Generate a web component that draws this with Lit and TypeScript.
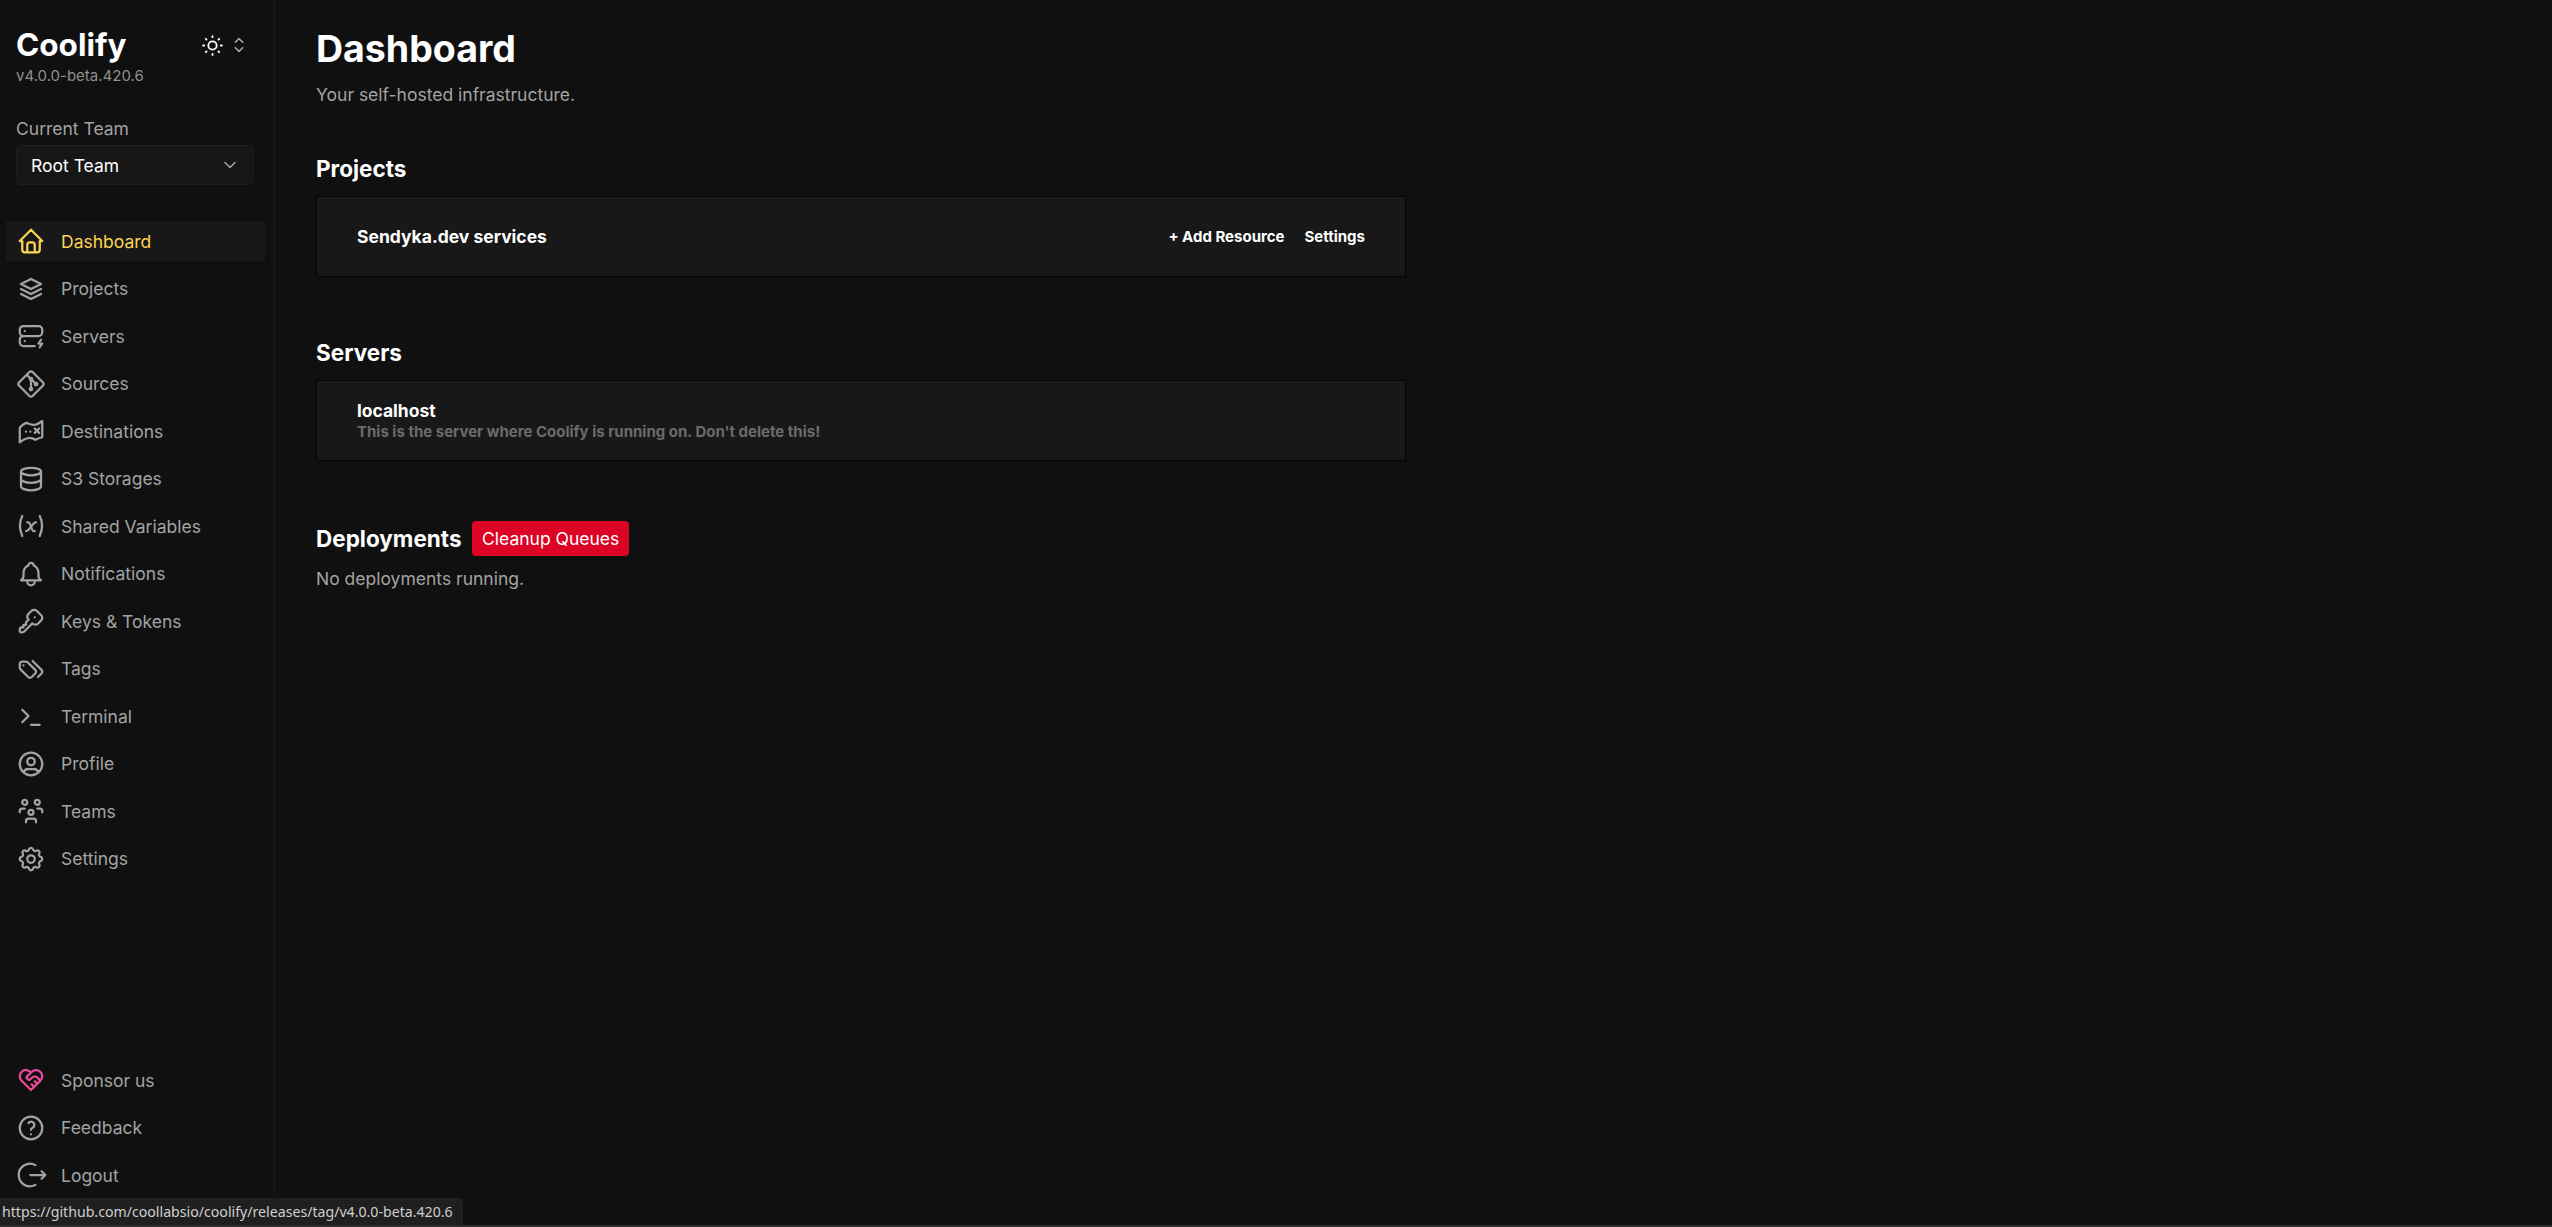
import { LitElement, html, css, svg } from 'lit';
import { customElement } from 'lit/decorators.js';

// tabler-style outline icons, 24 grid
const P: Record<string, string> = {
  home: 'M5 12H3l9-9l9 9h-2M5 12v7a2 2 0 0 0 2 2h10a2 2 0 0 0 2-2v-7M9 21v-6a2 2 0 0 1 2-2h2a2 2 0 0 1 2 2v6',
  stack: 'M12 4L4 8l8 4l8-4l-8-4M4 12l8 4l8-4M4 16l8 4l8-4',
  server:
    'M3 7a3 3 0 0 1 3-3h12a3 3 0 0 1 3 3v2a3 3 0 0 1-3 3h-12a3 3 0 0 1-3-3zM15 20h-9a3 3 0 0 1-3-3v-2a3 3 0 0 1 3-3h12M7 8v.01M7 16v.01M20 15l-2 3h3l-2 3',
  git: 'M15 12a1 1 0 1 0 2 0a1 1 0 1 0-2 0M11 8a1 1 0 1 0 2 0a1 1 0 1 0-2 0M11 16a1 1 0 1 0 2 0a1 1 0 1 0-2 0M12 15v-6M15 11l-2-2M11 7l-1.9-1.9M13.446 2.6l7.955 7.954a2.045 2.045 0 0 1 0 2.892l-7.955 7.955a2.045 2.045 0 0 1-2.892 0l-7.955-7.955a2.045 2.045 0 0 1 0-2.892l7.955-7.955a2.045 2.045 0 0 1 2.892 0z',
  map: 'M3 9.500c1.500-2 3.500-3.500 5.500-4c2.500 1 4 2 7 1.500c2-.5 3.500-1.500 5.500-3v13c-2 .5-3.500 1-5.500 2c-2.500-1.500-4.500-2-7-1c-2 .5-3.500 1.500-5.500 3zM8 12.500v.01M11.500 12.500v.01M15 10l3.500 3.500M18.500 10l-3.500 3.500',
  database:
    'M4 6a8 3 0 1 0 16 0a8 3 0 1 0-16 0M4 6v6a8 3 0 0 0 16 0v-6M4 12v6a8 3 0 0 0 16 0v-6',
  variable:
    'M5 4c-2.500 5-2.500 10 0 16m14-16c2.500 5 2.500 10 0 16M9 9h1c1 0 1 1 2.016 3.527C13 15 13 16 14 16h1M8 16c1.500 0 3-2 4-3.500S14.500 9 16 9',
  bell: 'M10 5a2 2 0 1 1 4 0a7 7 0 0 1 4 6v3a4 4 0 0 0 2 3h-16a4 4 0 0 0 2-3v-3a7 7 0 0 1 4-6M9 17v1a3 3 0 0 0 6 0v-1',
  key: 'M16.555 3.843l3.602 3.602a2.877 2.877 0 0 1 0 4.069l-2.643 2.643a2.877 2.877 0 0 1-4.069 0l-.301-.301l-6.558 6.558a2 2 0 0 1-1.239.578l-.175.008h-1.172a1 1 0 0 1-.993-.883l-.007-.117v-1.172a2 2 0 0 1 .467-1.284l.119-.13l.414-.414h2v-2h2v-2l2.144-2.144l-.301-.301a2.877 2.877 0 0 1 0-4.069l2.643-2.643a2.877 2.877 0 0 1 4.069 0zM15 9h.01',
  tags: 'M7.859 6h-2.834a2.025 2.025 0 0 0-2.025 2.025v2.834c0 .537.213 1.052.593 1.432l6.116 6.116a2.025 2.025 0 0 0 2.864 0l2.834-2.834a2.025 2.025 0 0 0 0-2.864l-6.117-6.116a2.025 2.025 0 0 0-1.431-.593zM17.573 18.407l2.834-2.834a2.025 2.025 0 0 0 0-2.864l-7.117-7.116M6 9h-.01',
  terminal: 'M5 7l5 5l-5 5M12 19h7',
  user: 'M3 12a9 9 0 1 0 18 0a9 9 0 1 0-18 0M9 10a3 3 0 1 0 6 0a3 3 0 1 0-6 0M6.168 18.849a4 4 0 0 1 3.832-2.849h4a4 4 0 0 1 3.834 2.855',
  users:
    'M10 13a2 2 0 1 0 4 0a2 2 0 0 0-4 0M8 21v-1a2 2 0 0 1 2-2h4a2 2 0 0 1 2 2v1M15 5a2 2 0 1 0 4 0a2 2 0 0 0-4 0M17 10h2a2 2 0 0 1 2 2v1M5 5a2 2 0 1 0 4 0a2 2 0 0 0-4 0M3 13v-1a2 2 0 0 1 2-2h2',
  settings:
    'M10.325 4.317c.426-1.756 2.924-1.756 3.35 0a1.724 1.724 0 0 0 2.573 1.066c1.543-.94 3.31.826 2.37 2.37a1.724 1.724 0 0 0 1.065 2.572c1.756.426 1.756 2.924 0 3.35a1.724 1.724 0 0 0-1.066 2.573c.94 1.543-.826 3.31-2.37 2.37a1.724 1.724 0 0 0-2.572 1.065c-.426 1.756-2.924 1.756-3.35 0a1.724 1.724 0 0 0-2.573-1.066c-1.543.94-3.31-.826-2.37-2.37a1.724 1.724 0 0 0-1.065-2.572c-1.756-.426-1.756-2.924 0-3.35a1.724 1.724 0 0 0 1.066-2.573c-.94-1.543.826-3.31 2.37-2.37c1 .608 2.296.07 2.572-1.065zM9 12a3 3 0 1 0 6 0a3 3 0 0 0-6 0',
  heart:
    'M19.500 12.572l-7.500 7.428l-7.500-7.428a5 5 0 1 1 7.500-6.566a5 5 0 1 1 7.500 6.572M12 6l-3.293 3.293a1 1 0 0 0 0 1.414l.543.543c.69.69 1.810.69 2.500 0l1-1a3.182 3.182 0 0 1 4.500 0l2.250 2.250M12.500 15.500l2 2M15 13l2 2',
  help: 'M3 12a9 9 0 1 0 18 0a9 9 0 1 0-18 0M12 17v.01M12 13.500a1.500 1.500 0 0 1 1-1.500a2.600 2.600 0 1 0-3-4',
  logout: 'M15.500 4.100a9 9 0 1 0 0 15.800M11.500 12h12M20.500 9l3 3l-3 3',
  sun: 'M8 12a4 4 0 1 0 8 0a4 4 0 1 0-8 0M3 12h1m8-9v1m8 8h1m-9 8v1M5.600 5.600l.7.7m12.100-.7l-.7.7m0 11.400l.7.7m-12.100-.7l-.7.7',
  updown: 'M8 9l4-4l4 4M16 15l-4 4l-4-4',
  chevron: 'M6 9l6 6l6-6',
};

const icon = (name: string, cls = 'ico') =>
  html`<svg class=${cls} viewBox="0 0 24 24" fill="none" stroke="currentColor" stroke-width="1.8" stroke-linecap="round" stroke-linejoin="round">
    ${svg`<path d=${P[name]} />`}
  </svg>`;

const NAV = [
  ['home', 'Dashboard'],
  ['stack', 'Projects'],
  ['server', 'Servers'],
  ['git', 'Sources'],
  ['map', 'Destinations'],
  ['database', 'S3 Storages'],
  ['variable', 'Shared Variables'],
  ['bell', 'Notifications'],
  ['key', 'Keys & Tokens'],
  ['tags', 'Tags'],
  ['terminal', 'Terminal'],
  ['user', 'Profile'],
  ['users', 'Teams'],
  ['settings', 'Settings'],
];

const BOTTOM = [
  ['heart', 'Sponsor us'],
  ['help', 'Feedback'],
  ['logout', 'Logout'],
];

@customElement('app-root')
export class AppRoot extends LitElement {
  static styles = css`
    :host {
      display: flex;
      height: 1227px;
      overflow: hidden;
      background: #101010;
      color: #a3a3a3;
      font-family: Inter, 'Liberation Sans', sans-serif;
      font-size: 17.5px;
      line-height: 25px;
      position: relative;
    }
    .side {
      width: 275px;
      flex: none;
      box-sizing: border-box;
      border-right: 1px solid #191919;
      display: flex;
      flex-direction: column;
      padding: 25px 0 0 6px;
    }
    .brand {
      display: flex;
      justify-content: space-between;
      padding: 0 24px 0 10px;
    }
    .logo {
      font-size: 31.5px;
      line-height: 40px;
      font-weight: 700;
      color: #fff;
    }
    .version {
      font-size: 15px;
      line-height: 20px;
      padding-left: 10px;
      margin-top: 1px;
      color: #8f8f8f;
    }
    .modes {
      display: flex;
      align-items: center;
      color: #fff;
      gap: 3px;
      height: 40px;
    }
    .sun {
      width: 25px;
      height: 25px;
      margin-left: -1px;
    }
    .updown {
      width: 22px;
      height: 22px;
      color: #a3a3a3;
    }
    .team {
      margin: 30px 20px 0 10px;
    }
    .team-box {
      margin-top: 4px;
      height: 40px;
      box-sizing: border-box;
      border: 1px solid #1e1e1e;
      background: #161616;
      border-radius: 5px;
      display: flex;
      align-items: center;
      justify-content: space-between;
      padding: 0 13px 0 14px;
      color: #fff;
    }
    .chev {
      width: 20px;
      height: 20px;
      color: #a3a3a3;
    }
    ul {
      list-style: none;
      margin: 0;
      padding: 0;
      display: flex;
      flex-direction: column;
      gap: 7.5px;
    }
    .nav {
      margin-top: 36px;
      flex: 1;
    }
    .bottom {
      padding-bottom: 32px;
    }
    li {
      height: 40px;
      width: 259px;
      display: flex;
      align-items: center;
      gap: 15px;
      padding-left: 10px;
      box-sizing: border-box;
    }
    li.active {
      background: #181818;
      color: #fcd452;
    }
    .ico {
      width: 30px;
      height: 30px;
      flex: none;
      overflow: visible;
    }
    li.pink .ico {
      color: #ec4899;
    }
    main {
      flex: 1;
      padding: 26px 0 0 41px;
    }
    h1 {
      margin: 0;
      font-size: 37.5px;
      line-height: 45px;
      font-weight: 700;
      color: #fff;
    }
    .sub {
      margin-top: 10.500px;
    }
    h2 {
      margin: 0;
      font-size: 22.5px;
      line-height: 30px;
      font-weight: 700;
      color: #fff;
    }
    .section {
      width: 1090px;
    }
    .section.projects {
      margin-top: 47.500px;
    }
    .section.servers {
      margin-top: 61px;
    }
    .section.deploy {
      margin-top: 60px;
    }
    .card {
      margin-top: 12px;
      height: 81px;
      box-sizing: border-box;
      background: #181818;
      border: 1px solid #050505;
      display: flex;
      align-items: center;
      justify-content: space-between;
      padding: 0 40px;
      color: #fff;
      font-weight: 700;
    }
    .card .title {
      font-size: 17.5px;
      line-height: 22px;
    }
    .card .desc {
      font-size: 15px;
      line-height: 19px;
      color: #6b6b6b;
    }
    .actions {
      display: flex;
      gap: 20px;
      font-size: 15px;
    }
    .dep-head {
      display: flex;
      align-items: center;
      gap: 10.500px;
    }
    button {
      all: unset;
      height: 35px;
      box-sizing: border-box;
      padding: 0 10px;
      background: #dc0425;
      border-radius: 4px;
      color: #fff;
      display: flex;
      align-items: center;
    }
    .none {
      margin-top: 10px;
    }
    .status {
      position: absolute;
      left: 0;
      bottom: 2px;
      height: 27px;
      width: 463px;
      box-sizing: border-box;
      background: #1f1f1f;
      border-top-right-radius: 3px;
      padding-left: 2px;
      font-family: 'Noto Sans', sans-serif;
      font-size: 14.150px;
      line-height: 27px;
      color: #cfcfcf;
      white-space: nowrap;
    }
    .edge {
      position: absolute;
      left: 0;
      right: 0;
      bottom: 0;
      height: 2px;
      background: #2e2e2e;
    }
  `;

  private row(item: string[], cls = '') {
    return html`<li class=${cls}>${icon(item[0])}<span>${item[1]}</span></li>`;
  }

  render() {
    return html`
      <aside class="side">
        <div class="brand">
          <div class="logo">Coolify</div>
          <div class="modes">${icon('sun', 'sun')}${icon('updown', 'updown')}</div>
        </div>
        <div class="version">v4.0.0-beta.420.6</div>
        <div class="team">
          Current Team
          <div class="team-box"><span>Root Team</span>${icon('chevron', 'chev')}</div>
        </div>
        <ul class="nav">
          ${NAV.map((n, i) => this.row(n, i === 0 ? 'active' : ''))}
        </ul>
        <ul class="bottom">
          ${BOTTOM.map((n, i) => this.row(n, i === 0 ? 'pink' : ''))}
        </ul>
      </aside>
      <main>
        <h1>Dashboard</h1>
        <div class="sub">Your self-hosted infrastructure.</div>
        <section class="section projects">
          <h2>Projects</h2>
          <div class="card">
            <div class="title">Sendyka.dev services</div>
            <div class="actions"><span>+ Add Resource</span><span>Settings</span></div>
          </div>
        </section>
        <section class="section servers">
          <h2>Servers</h2>
          <div class="card">
            <div>
              <div class="title">localhost</div>
              <div class="desc">This is the server where Coolify is running on. Don't delete this!</div>
            </div>
          </div>
        </section>
        <section class="section deploy">
          <div class="dep-head"><h2>Deployments</h2><button>Cleanup Queues</button></div>
          <div class="none">No deployments running.</div>
        </section>
      </main>
      <div class="status">https://github.com/coollabsio/coolify/releases/tag/v4.0.0-beta.420.6</div>
      <div class="edge"></div>
    `;
  }
}
